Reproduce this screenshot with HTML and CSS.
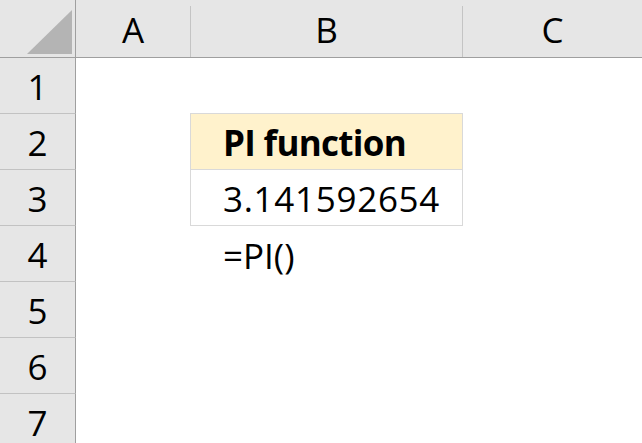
FILE: index.html
```html
<!DOCTYPE html>
<html>
<head>
<meta charset="utf-8">
<link rel="stylesheet" href="styles.css">
</head>
<body>
<div class="sheet">
  <div class="corner">
    <svg width="76" height="58" viewBox="0 0 76 58"><polygon points="72,10 72,54 27,54" fill="#b4b4b4"/></svg>
  </div>
  <div class="colhead col-a"><span>A</span></div>
  <div class="colhead col-b"><span>B</span></div>
  <div class="colhead col-c"><span>C</span></div>

  <div class="rowhead">1</div><div class="cell"></div><div class="cell"></div><div class="cell"></div>
  <div class="rowhead">2</div><div class="cell"></div><div class="cell tbl tbl-head">PI function</div><div class="cell"></div>
  <div class="rowhead">3</div><div class="cell"></div><div class="cell tbl tbl-body">3.141592654</div><div class="cell"></div>
  <div class="rowhead">4</div><div class="cell"></div><div class="cell formula">=PI()</div><div class="cell"></div>
  <div class="rowhead">5</div><div class="cell"></div><div class="cell"></div><div class="cell"></div>
  <div class="rowhead">6</div><div class="cell"></div><div class="cell"></div><div class="cell"></div>
  <div class="rowhead last">7</div><div class="cell"></div><div class="cell"></div><div class="cell"></div>
</div>
</body>
</html>
```

FILE: styles.css
```css
* { box-sizing: border-box; }
html, body { margin: 0; padding: 0; background: #ffffff; }
body { width: 642px; height: 443px; overflow: hidden; }

.sheet {
  display: grid;
  grid-template-columns: 76px 115px 272px 179px;
  grid-template-rows: 58px repeat(7, 56px);
  font-family: "Open Sans", "DejaVu Sans", sans-serif;
  color: #000;
}

.corner {
  background: #e6e6e6;
  border-right: 1px solid #9f9f9f;
  border-bottom: 1px solid #9f9f9f;
}
.corner svg { display: block; }

.colhead {
  background: #e6e6e6;
  border-bottom: 1px solid #9f9f9f;
  padding-top: 6px;
  display: flex;
}
.colhead span {
  flex: 1;
  display: flex;
  align-items: center;
  justify-content: center;
  font-size: 35px;
  border-right: 1px solid #c4c4c4;
  padding-bottom: 4px;
}
.col-c span { border-right: none; }

.rowhead {
  background: #e6e6e6;
  border-right: 1px solid #9f9f9f;
  border-bottom: 1px solid #c2c2c2;
  display: flex;
  align-items: center;
  justify-content: center;
  font-size: 35px;
  padding-top: 2px;
}

.cell {
  display: flex;
  align-items: center;
  padding-left: 32px;
  font-size: 35px;
  padding-top: 2px;
}

.tbl { border: 1px solid #d9d9d9; margin-left: -1px; }
.tbl-head {
  background: #fff2cc;
  font-weight: 700;
  margin-top: -1px;
  letter-spacing: -0.7px;
}
.tbl-body { border-top: none; letter-spacing: 0.7px; }
```
